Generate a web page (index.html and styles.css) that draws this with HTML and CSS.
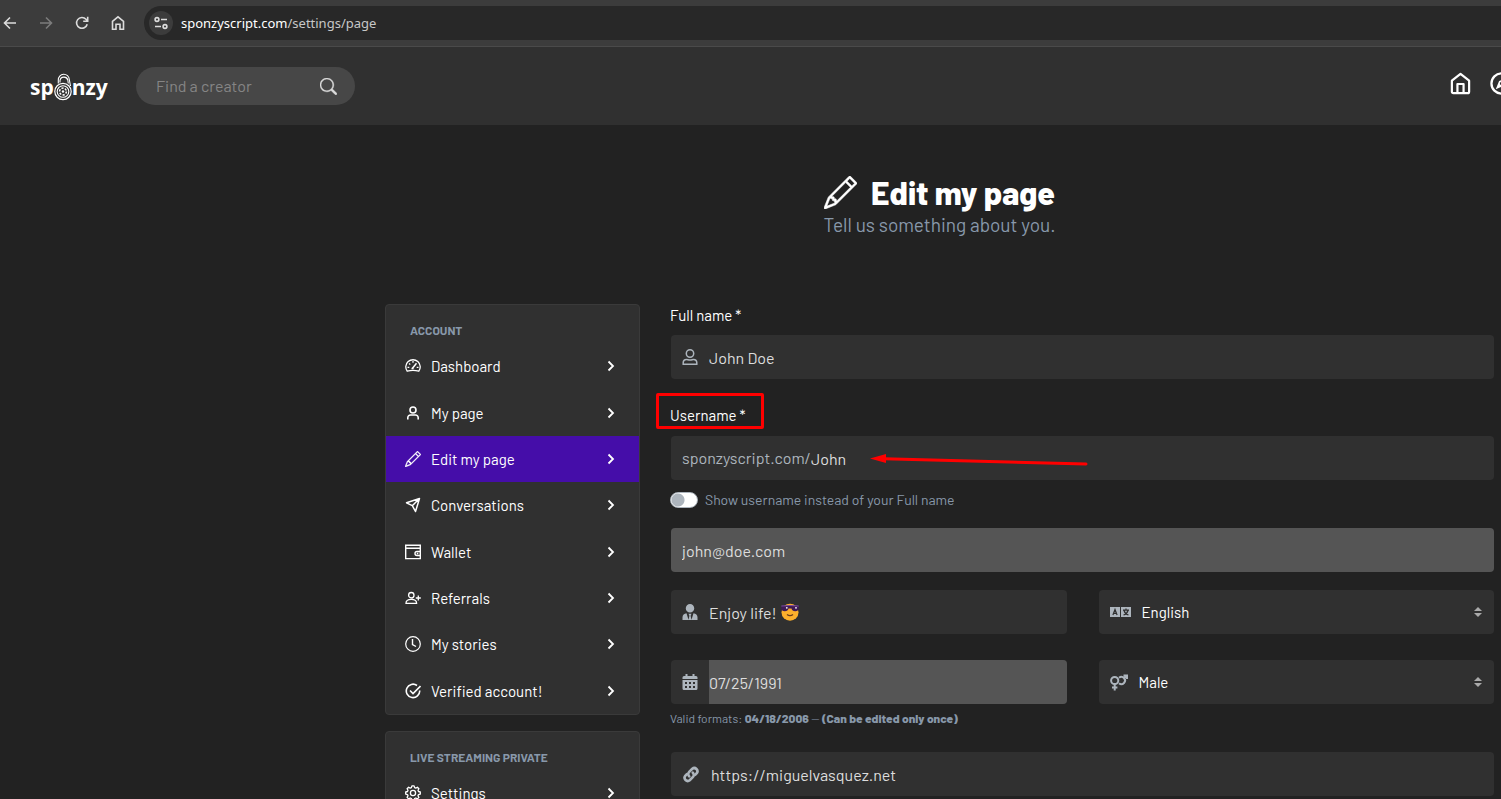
FILE: index.html
```html
<!DOCTYPE html>
<html lang="en">
<head>
  <meta charset="UTF-8" />
  <meta name="viewport" content="width=device-width, initial-scale=1.0" />
  <title>Edit my page</title>
  <link rel="stylesheet" href="styles.css">
</head>
<body>
  <svg class="sprite" aria-hidden="true">
    <symbol id="chevron" viewBox="0 0 24 24"><path fill="none" stroke="currentColor" stroke-width="3.6" d="M7 3l9 9-9 9"/></symbol>
    <symbol id="pencil" viewBox="0 0 16 16"><path fill="currentColor" stroke="currentColor" stroke-width=".25" d="M12.146.146a.5.5 0 0 1 .708 0l3 3a.5.5 0 0 1 0 .708l-10 10a.5.5 0 0 1-.168.11l-5 2a.5.5 0 0 1-.65-.65l2-5a.5.5 0 0 1 .11-.168l10-10zM11.207 2.5 13.5 4.793 14.793 3.5 12.5 1.207 11.207 2.5zm1.586 3L10.5 3.207 4 9.707V10h.5a.5.5 0 0 1 .5.5v.5h.5a.5.5 0 0 1 .5.5v.5h.293l6.5-6.5zm-9.761 5.175-.106.106-1.528 3.821 3.821-1.528.106-.106A.5.5 0 0 1 5 12.5V12h-.5a.5.5 0 0 1-.5-.5V11h-.5a.5.5 0 0 1-.468-.325z"/></symbol>
    <symbol id="home" viewBox="0 0 24 24"><g fill="none" stroke="currentColor" stroke-width="2.3" stroke-linejoin="round"><path d="M3 9L12 2l9 7v11.500a1.500 1.500 0 0 1-1.500 1.500h-15A1.500 1.500 0 0 1 3 20.500z"/><path d="M8.800 22v-9.500h6.400V22"/></g></symbol>
  </svg>

  <div class="browser-bar">
    <div class="browser-nav">
      <button class="browser-btn" aria-label="Back"><svg viewBox="0 0 16 16"><path d="M14 8H3M8 2.500L2.500 8 8 13.500"/></svg></button>
      <button class="browser-btn dim" aria-label="Forward"><svg viewBox="0 0 16 16"><path d="M2 8h11M8 2.500L13.500 8 8 13.500"/></svg></button>
      <button class="browser-btn" aria-label="Reload"><svg viewBox="0 0 16 16"><path d="M13.200 9.200A5.400 5.400 0 1 1 12 4.300L13.500 6M13.700 1.800V6.300H9.200"/></svg></button>
      <button class="browser-btn" aria-label="Home page"><svg viewBox="0 0 16 16"><path d="M2.500 6.300L8 1.800l5.500 4.500V14.300H10V9.300H6v5H2.500z"/></svg></button>
    </div>
    <div class="address">
      <span class="site-info"><svg viewBox="0 0 16 16"><circle cx="4" cy="4.500" r="1.900"/><path d="M8 4.500h6M2 11.500h6"/><circle cx="12" cy="11.500" r="1.900"/></svg></span>
      <span class="url"><b>sponzyscript.com</b>/settings/page</span>
    </div>
  </div>

  <header class="navbar">
    <a class="logo" href="#" aria-label="sponzy">
      <span>sp</span>
      <svg viewBox="0 0 18 28"><g fill="none" stroke="currentColor"><path stroke-width="1.100" d="M4.300 10.500V7a5.500 5.500 0 0 1 11-.5L16.500 13M6 9.500V7.500a4 4 0 0 1 7.800-.5l.5 3.500"/><circle cx="9" cy="18.500" r="8.200" stroke-width="1.200"/><circle cx="9" cy="18.500" r="5.800" stroke-width="1.100"/><circle cx="9" cy="18.500" r="3.400" stroke-width="1.500" stroke-dasharray="2.200 1.300"/></g><circle cx="9" cy="18.500" r="1.200" fill="currentColor"/></svg>
      <span>nzy</span>
    </a>
    <form class="search">
      <input type="text" placeholder="Find a creator" aria-label="Find a creator">
      <button type="button" aria-label="Search"><svg viewBox="0 0 16 16"><path fill="currentColor" stroke="currentColor" stroke-width=".4" d="M11.742 10.344a6.500 6.500 0 1 0-1.397 1.398l3.850 3.850a1 1 0 0 0 1.415-1.414l-3.850-3.850zM12 6.500a5.500 5.500 0 1 1-11 0 5.500 5.500 0 0 1 11 0z"/></svg></button>
    </form>
    <nav class="nav-icons">
      <a href="#" aria-label="Home"><svg><use href="#home"/></svg></a>
      <a href="#" aria-label="Explore"><svg viewBox="0 0 24 24"><circle cx="12" cy="12" r="10.500" fill="none" stroke="currentColor" stroke-width="2.400"/><path fill="currentColor" fill-rule="evenodd" d="M18 6l-3.500 8.500L6 18l3.500-8.500zM12 10.300a1.700 1.700 0 1 0 0 3.400 1.700 1.700 0 0 0 0-3.400z"/></svg></a>
    </nav>
  </header>

  <div class="container">
    <div class="page-title">
      <h1><svg><use href="#pencil"/></svg>Edit my page</h1>
      <p>Tell us something about you.</p>
    </div>

    <div class="columns">
      <aside class="sidebar">
        <div class="card">
          <h2>Account</h2>
          <div class="menu">
            <a href="#"><svg viewBox="0 0 16 16"><g fill="none" stroke="currentColor" stroke-width="1.300"><path d="M2.200 13.200A7.200 7.200 0 1 1 13.800 13.200C10 12 6 12 2.200 13.200z"/><path stroke-width="1.500" d="M7.500 10.200L11.500 5.200"/><path d="M8 3v1.800M4 5.500l1.300 1M2.500 9.300h1.800M11.700 9.300h1.800M6.500 10.500h2"/></g></svg><span>Dashboard</span><svg class="arrow"><use href="#chevron"/></svg></a>
            <a href="#"><svg viewBox="0 0 16 16"><g fill="none" stroke="currentColor" stroke-width="1.600"><circle cx="8" cy="5" r="3"/><path d="M2.800 14.500v-1.800a2.700 2.700 0 0 1 2.700-2.700h5a2.700 2.700 0 0 1 2.700 2.700v1.800"/></g></svg><span>My page</span><svg class="arrow"><use href="#chevron"/></svg></a>
            <a class="active" href="#"><svg><use href="#pencil"/></svg><span>Edit my page</span><svg class="arrow"><use href="#chevron"/></svg></a>
            <a href="#"><svg viewBox="0 0 16 16"><path fill="none" stroke="currentColor" stroke-width="1.500" stroke-linejoin="round" d="M14.500 1.500L10.500 14.500 7.300 8.700 1.500 5.800zM14.500 1.500L7.300 8.700"/></svg><span>Conversations</span><svg class="arrow"><use href="#chevron"/></svg></a>
            <a href="#"><svg viewBox="0 0 16 16"><path fill="none" stroke="currentColor" stroke-width="1.400" d="M.7 1.200h14.600v13.400H.7zM.7 4.200h14.600M15.300 7.500H12a2 2 0 0 0 0 4h3.300M11.800 9.500h1.500"/></svg><span>Wallet</span><svg class="arrow"><use href="#chevron"/></svg></a>
            <a href="#"><svg viewBox="0 0 16 16"><path fill="none" stroke="currentColor" stroke-width="1.300" d="M6.300 2.500a2.700 2.700 0 1 1 0 5.400 2.700 2.700 0 0 1 0-5.400zM1 13.300c0-2.300 2-3.900 5.300-3.900s5.300 1.600 5.300 3.900zM13.300 5.500v5M10.800 8h5"/></svg><span>Referrals</span><svg class="arrow"><use href="#chevron"/></svg></a>
            <a href="#"><svg viewBox="0 0 16 16"><g fill="none" stroke="currentColor" stroke-width="1.200"><circle cx="8" cy="8" r="7.300"/><path stroke-width="1.400" d="M7.500 3v5.500l3.500 2"/></g></svg><span>My stories</span><svg class="arrow"><use href="#chevron"/></svg></a>
            <a href="#"><svg viewBox="0 0 16 16"><path fill="none" stroke="currentColor" stroke-width="1.600" d="M12 2.500A6.700 6.700 0 1 0 14.700 7.500M5 7.500l3 3L15.500 3"/></svg><span>Verified account!</span><svg class="arrow"><use href="#chevron"/></svg></a>
          </div>
        </div>
        <div class="card">
          <h2>Live streaming private</h2>
          <a class="menu-link" href="#"><svg viewBox="0 0 16 16"><g fill="none" stroke="currentColor" stroke-width="1.300" stroke-linejoin="round"><circle cx="8" cy="8" r="2.600"/><path d="M6.900.8h2.200l.5 1.800 1.200.5 1.600-.9 1.500 1.500-.9 1.600.5 1.200 1.800.5v2.100l-1.800.5-.5 1.200.9 1.600-1.500 1.500-1.600-.9-1.200.5-.5 1.800H6.900l-.5-1.800-1.200-.5-1.600.9-1.500-1.500.9-1.600-.5-1.200L.7 9.100V7l1.800-.5.5-1.200-.9-1.600 1.500-1.500 1.600.9 1.200-.5z"/></g></svg><span>Settings</span><svg class="arrow"><use href="#chevron"/></svg></a>
        </div>
      </aside>

      <form class="form">
        <label class="label" for="name">Full name *</label>
        <div class="field">
          <svg viewBox="0 0 16 16"><g fill="none" stroke="currentColor" stroke-width="1.500"><circle cx="8" cy="4.500" r="3.700"/><path d="M1.200 15.200v-1.400c0-2 1.500-3.300 3.400-3.300 1.100 0 1.600.6 3.400.6s2.300-.6 3.400-.6c1.900 0 3.400 1.300 3.400 3.300v1.400z"/></g></svg>
          <input id="name" type="text" value="John Doe">
        </div>

        <div class="label-row">
          <label class="label" for="username">Username *</label>
          <span class="mark-box"></span>
        </div>
        <div class="field">
          <span class="prefix">sponzyscript.com/</span>
          <input id="username" type="text" value="John">
          <svg class="mark-arrow" viewBox="0 0 218 14"><path fill="#f00" d="M0 5.500L16 1v9z"/><path stroke="#f00" stroke-width="3" stroke-linecap="round" d="M14 5.700L216 11"/></svg>
        </div>

        <label class="switch"><input type="checkbox">Show username instead of your Full name</label>

        <div class="field readonly email">
          <input type="text" value="john@doe.com" aria-label="Email" readonly>
        </div>

        <div class="grid">
          <div class="field">
            <svg viewBox="0 0 16 16"><path fill="currentColor" d="M8 0a4 4 0 1 1 0 8.500A4.200 4.200 0 0 1 8 0zM4.500 9.300L6.500 15.800l.9-4-.9-2h3l-.9 2 .9 4 2-6.500c2.400.2 4 1.800 4 4V16H.5v-2.700c0-2.200 1.600-3.800 4-4z"/></svg>
            <input type="text" value="Enjoy life! " class="bio" aria-label="Profession">
            <svg class="emoji" viewBox="0 0 18 18"><circle cx="9" cy="9.300" r="8.500" fill="#fdb02c"/><path fill="#3f1b55" d="M.3 3Q9 2 17.700 3v2.500c0 1.800-1.300 2.700-3.500 2.700-2.200 0-3.200-.7-3.700-2.700h-3C7 7.500 6 8.200 3.800 8.200 1.600 8.200.3 7.300.3 5.500z"/><path fill="none" stroke="#7a4aa5" d="M.3 3Q9 2 17.700 3"/><path fill="none" stroke="#6b3d1c" stroke-width="1.300" d="M6 11.500q3 2.400 6 0"/><circle cx="5.800" cy="4.800" r=".9" fill="#fff"/><circle cx="15" cy="4.800" r=".9" fill="#fff"/></svg>
          </div>
          <div class="field">
            <svg class="wide" viewBox="0 0 21 10"><path fill="currentColor" d="M0 0h10v10H0zM11 0h10v10H11z"/><path fill="none" stroke="#303030" stroke-width="1.200" d="M2.900 8L5 2.500 7.100 8M3.500 6.300h3M13 3.200h6M16 1.600v1.600M18 3.500Q17 7 13.500 8M14 3.500Q15 7 18.500 8"/></svg>
            <select aria-label="Language"><option>English</option></select>
          </div>
          <div class="field date">
            <svg viewBox="0 0 16 16"><path fill="currentColor" fill-rule="evenodd" d="M3.500 0h2v2h5V0h2v2H14a1.500 1.500 0 0 1 1.500 1.500V5H.5V3.500A1.500 1.500 0 0 1 2 2h1.500zM.5 6h15v8.500A1.500 1.500 0 0 1 14 16H2a1.500 1.500 0 0 1-1.500-1.500zM3 8v2h2V8zm4 0v2h2V8zm4 0v2h2V8zM3 12v2h2v-2zm4 0v2h2v-2zm4 0v2h2v-2z"/></svg>
            <input type="text" value="07/25/1991" aria-label="Birthdate" readonly>
          </div>
          <div class="field">
            <svg class="gender" viewBox="0 0 18 16"><g fill="none" stroke="currentColor" stroke-width="2"><circle cx="4.700" cy="6" r="3.600"/><path d="M4.700 9.500V16M2 13h5.400M9 3.300a3.600 3.600 0 1 1 0 5.400M14 3.700L17 .9M13.500 1H17v3.500"/></g></svg>
            <select aria-label="Gender"><option>Male</option></select>
          </div>
        </div>
        <small class="hint">Valid formats: <strong>04/18/2006</strong> — <strong>(Can be edited only once)</strong></small>

        <div class="field">
          <svg class="link" viewBox="0 0 16 16"><g fill="none" stroke="currentColor" stroke-width="2.500" stroke-linecap="round"><path d="M6.300 9.700a3 3 0 0 1 0-4.200l2.900-2.900a3 3 0 0 1 4.200 4.200l-1.500 1.500"/><path d="M9.700 6.300a3 3 0 0 1 0 4.200l-2.900 2.900a3 3 0 0 1-4.200-4.200l1.500-1.500"/></g></svg>
          <input type="text" value="https://miguelvasquez.net" aria-label="Website">
        </div>
      </form>
    </div>
  </div>
</body>
</html>
```
FILE: styles.css
```css
* {
  box-sizing: border-box;
}
body {
  margin: 0;
  background: #222;
  color: #fff;
  font: 16px/24px Barlow, Roboto, sans-serif;
  height: 100vh;
  overflow: hidden;
}
a {
  color: inherit;
  text-decoration: none;
}
button {
  padding: 0;
  border: 0;
  background: none;
  color: inherit;
}
svg {
  display: block;
  flex: none;
}
.sprite {
  position: absolute;
  width: 0;
  height: 0;
}

.browser-bar {
  display: flex;
  align-items: center;
  gap: 18px;
  height: 47px;
  padding-left: 2px;
  background: #3c3c3c;
  border-bottom: 1px solid #4a4a4a;
}
.browser-nav {
  display: flex;
  gap: 20px;
}
.browser-btn svg,
.site-info svg {
  width: 16px;
  height: 16px;
  fill: none;
  stroke: #dcdcdc;
  stroke-width: 1.6;
}
.browser-btn.dim svg {
  stroke: #7c7c7c;
}
.address {
  flex: 1;
  display: flex;
  align-items: center;
  gap: 8px;
  height: 34px;
  padding-left: 5px;
  border-radius: 17px 0 0 17px;
  background: #282828;
  font: 13px/20px "Noto Sans", sans-serif;
  color: #c7c7c7;
}
.address b {
  font-weight: 400;
  color: #fff;
}
.site-info {
  display: flex;
  padding: 4px;
  border-radius: 50%;
  background: #3c3c3c;
}

.navbar {
  display: flex;
  align-items: center;
  height: 78px;
  padding-left: 30px;
  background: #303030;
  overflow: hidden;
}
.logo {
  display: flex;
  align-items: center;
  width: 106px;
  padding-top: 2px;
  font: 700 21px/28px "Open Sans", sans-serif;
}
.logo svg {
  width: 18px;
  height: 28px;
}
.search {
  display: flex;
  align-items: center;
  width: 219px;
  height: 38px;
  padding: 0 18px 0 20px;
  border-radius: 19px;
  background: #474747;
}
.search input {
  flex: 1;
  min-width: 0;
  padding: 0;
  border: 0;
  background: none;
  font: inherit;
  color: #fff;
}
.search input::placeholder {
  color: #858585;
}
.search svg {
  width: 17px;
  height: 17px;
  color: #ddd;
}
.nav-icons {
  display: flex;
  gap: 18px;
  margin: 0 -12px 6px auto;
}
.nav-icons svg {
  width: 23px;
  height: 23px;
}

.container {
  margin: 0 7px 0 385px;
  padding-top: 48px;
}
.page-title {
  margin-bottom: 67px;
  text-align: center;
}
.page-title h1 {
  display: flex;
  justify-content: center;
  align-items: center;
  gap: 14px;
  margin: 0;
  padding-bottom: 2px;
  font-size: 32px;
  line-height: 38px;
  font-weight: 800;
}
.page-title h1 svg {
  width: 33px;
  height: 33px;
}
.page-title p {
  margin: 0;
  font-size: 19px;
  color: #8898aa;
}
.columns {
  display: grid;
  grid-template-columns: 255px 1fr;
  gap: 30px;
}

.card {
  margin-bottom: 16px;
  border: 1px solid #3a3a3a;
  border-radius: 4px;
  background: #303030;
}
.card h2 {
  margin: 0;
  padding: 15px 24px 3px;
  font-size: 12px;
  line-height: 20px;
  font-weight: 700;
  text-transform: uppercase;
  color: #8898aa;
}
.menu {
  display: flex;
  flex-direction: column;
  min-height: 371px;
}
.menu a,
.menu-link {
  flex: 1;
  display: flex;
  align-items: center;
  gap: 10px;
  padding: 0 22px 0 19px;
  font-size: 15px;
}
.menu-link {
  height: 46px;
}
.menu a.active {
  background: #450da9;
}
.menu svg,
.menu-link svg {
  width: 16px;
  height: 16px;
}
.card .arrow {
  width: 12px;
  height: 12px;
  margin-left: auto;
}

.form {
  display: flex;
  flex-direction: column;
  min-width: 0;
}
.label {
  font-size: 15px;
  line-height: 23px;
}
.label-row {
  position: relative;
  display: flex;
  margin-top: 25px;
}
.field {
  position: relative;
  display: flex;
  align-items: center;
  height: 44px;
  margin-left: 1px;
  padding: 0 11px;
  border-radius: 4px;
  background: #303030;
  color: #adb5bd;
}
.label + .field {
  margin-top: 8px;
}
.label-row + .field {
  margin-top: 9px;
}
.field svg {
  width: 16px;
  height: 16px;
  margin-right: 11px;
}
.field .wide {
  width: 21px;
}
.field .gender,
.field .link {
  width: 18px;
  height: 17px;
}
.field input,
.field select {
  flex: 1;
  min-width: 0;
  height: 44px;
  padding: 0;
  border: 0;
  background: none;
  font: inherit;
  color: #ddd;
}
.field select {
  appearance: none;
  font-size: 15px;
  color: #fff;
}
.field:has(select)::before,
.field:has(select)::after {
  content: "";
  position: absolute;
  right: 12px;
  border: 4px solid transparent;
}
.field:has(select)::before {
  top: 13px;
  border-bottom-color: #aaa;
}
.field:has(select)::after {
  top: 23px;
  border-top-color: #aaa;
}
.readonly,
.date input {
  background: #555;
}
.email {
  margin-top: 16px;
}
.date {
  padding-right: 0;
}
.date input {
  border-radius: 0 4px 4px 0;
}
.field .bio {
  flex: none;
  width: 72px;
}
.field .emoji {
  width: 18px;
  height: 18px;
  margin: 0;
}
.switch {
  display: flex;
  align-items: center;
  gap: 7px;
  margin-top: 8px;
  font-size: 14px;
  color: #8898aa;
}
.switch input {
  appearance: none;
  width: 28px;
  height: 16px;
  margin: 0;
  border: 1px solid #adb5bd;
  border-radius: 8px;
  background: radial-gradient(circle at 7px 7px, #adb5bd 6px, #fff 7px);
}
.grid {
  display: grid;
  grid-template-columns: 1fr 1fr;
  gap: 26px 31px;
  margin-top: 18px;
}
.hint {
  margin: 5px 0 24px;
  font-size: 12px;
  line-height: 19px;
  color: #8898aa;
}
.hint strong {
  font-weight: 800;
}

/* red highlights */
.mark-box {
  position: absolute;
  left: -14px;
  top: -11px;
  width: 108px;
  height: 36px;
  border: 3px solid #f00;
  border-radius: 2px;
}
.field .mark-arrow {
  position: absolute;
  left: 199px;
  top: 17px;
  width: 218px;
  height: 14px;
  margin: 0;
}
```
